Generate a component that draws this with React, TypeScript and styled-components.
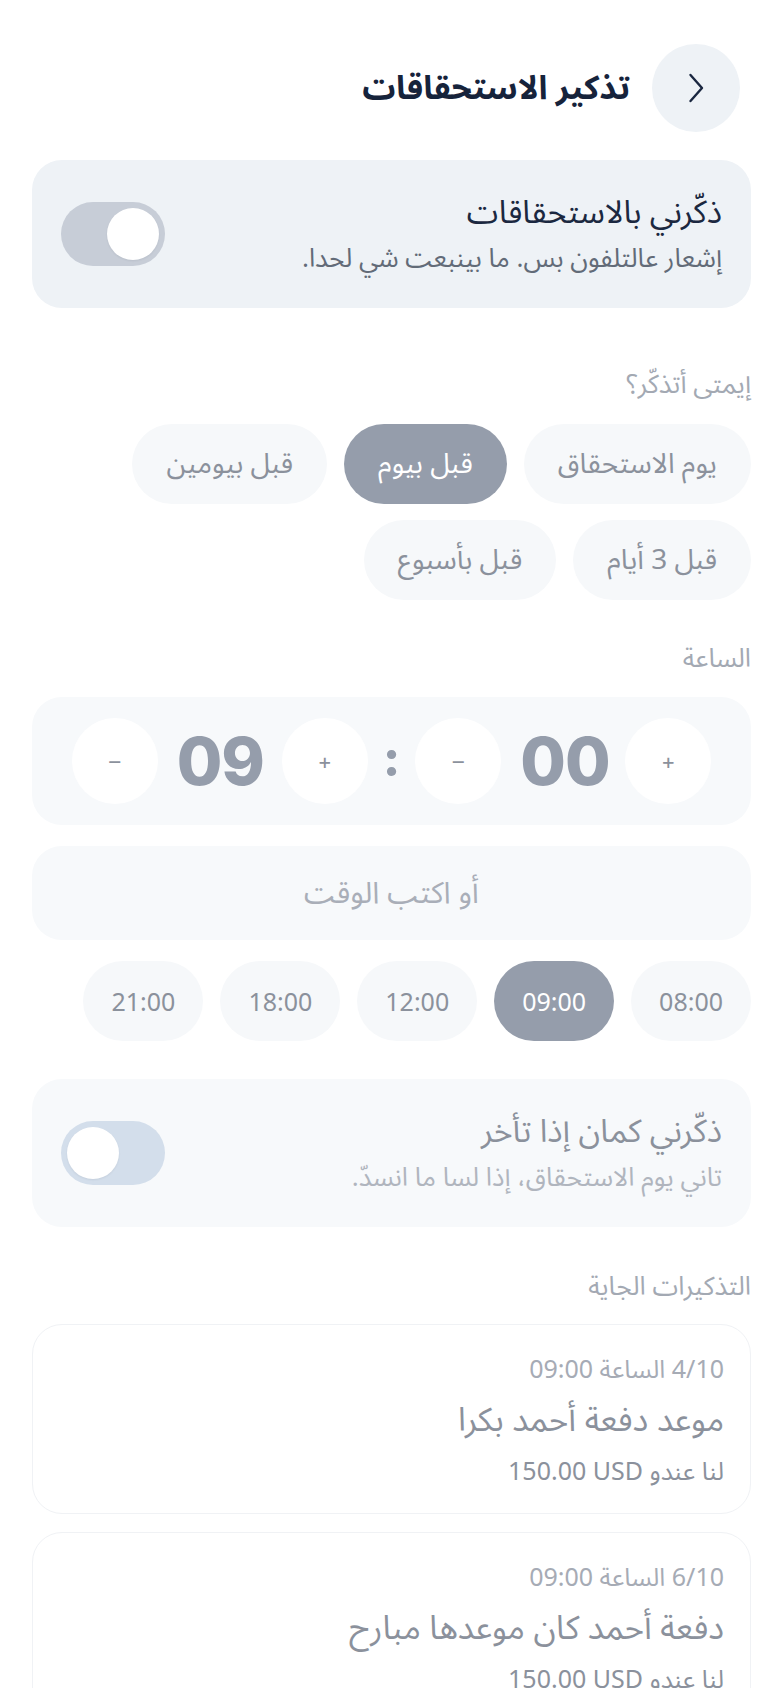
import React from "react";
import styled, { createGlobalStyle } from "styled-components";

const GlobalStyle = createGlobalStyle`
  body {
    margin: 0;
    background: #ffffff;
    font-family: "Noto Sans Arabic", "DejaVu Sans", "Noto Sans", sans-serif;
  }
`;

const Page = styled.div`
  direction: rtl;
  padding: 44px 29px 40px 32px;
  display: flex;
  flex-direction: column;
`;

const Header = styled.div`
  display: flex;
  align-items: center;
  gap: 22px;
  padding-right: 11px;
`;

const BackButton = styled.button`
  width: 88px;
  height: 88px;
  border-radius: 50%;
  border: none;
  background: #eef2f6;
  display: flex;
  align-items: center;
  justify-content: center;
  padding: 0;
`;

const Title = styled.h1`
  margin: 0;
  font-size: 33px;
  font-weight: 700;
  color: #16233b;
`;

const ToggleCard = styled.div<{ $strong?: boolean }>`
  display: flex;
  align-items: center;
  justify-content: space-between;
  min-height: 148px;
  box-sizing: border-box;
  padding: 0 29px;
  border-radius: 30px;
  background: ${(p) => (p.$strong ? "#eef2f6" : "#f7f9fb")};
  margin-top: ${(p) => (p.$strong ? "28px" : "38px")};
`;

const ToggleText = styled.div`
  display: flex;
  flex-direction: column;
  gap: 10px;
`;

const ToggleTitle = styled.div<{ $strong?: boolean }>`
  font-size: 32px;
  line-height: 40px;
  color: ${(p) => (p.$strong ? "#1b2840" : "#8b919c")};
`;

const ToggleSub = styled.div<{ $strong?: boolean }>`
  font-size: 26px;
  line-height: 32px;
  color: ${(p) => (p.$strong ? "#626b78" : "#b0b5be")};
`;

const Track = styled.div<{ $on?: boolean }>`
  width: 104px;
  height: 64px;
  border-radius: 32px;
  box-sizing: border-box;
  padding: 6px;
  display: flex;
  justify-content: ${(p) => (p.$on ? "flex-start" : "flex-end")};
  background: ${(p) => (p.$on ? "#c7cdd7" : "#d3deeb")};
`;

const Knob = styled.div`
  width: 52px;
  height: 52px;
  border-radius: 50%;
  background: #ffffff;
  box-shadow: 0 1px 2px rgba(40, 50, 70, 0.08);
`;

const SectionLabel = styled.div<{ $top: number }>`
  font-size: 26px;
  line-height: 34px;
  color: #a3a9b3;
  margin-top: ${(p) => p.$top}px;
`;

const ChipWrap = styled.div<{ $top: number }>`
  display: flex;
  flex-wrap: wrap;
  gap: 16px 17px;
  margin-top: ${(p) => p.$top}px;
`;

const Chip = styled.button<{ $active?: boolean }>`
  height: 80px;
  padding: 0 34px;
  border: none;
  border-radius: 40px;
  font-family: inherit;
  font-size: 28px;
  background: ${(p) => (p.$active ? "#959dab" : "#f6f8fa")};
  color: ${(p) => (p.$active ? "#ffffff" : "#8b919c")};
`;

const TimeChip = styled(Chip)`
  padding: 0 28px;
  font-family: "Noto Sans", "DejaVu Sans", sans-serif;
  font-size: 25px;
`;

const TimeCard = styled.div`
  margin-top: 21px;
  height: 128px;
  border-radius: 30px;
  background: #f7f9fb;
  display: flex;
  align-items: center;
  justify-content: center;
  direction: ltr;
  gap: 15px;
`;

const Stepper = styled.div`
  display: flex;
  align-items: center;
  gap: 19px;
`;

const StepButton = styled.button`
  width: 86px;
  height: 86px;
  border-radius: 50%;
  border: none;
  background: #ffffff;
  color: #8b919c;
  font-family: "Inter", sans-serif;
  font-size: 22px;
  display: flex;
  align-items: center;
  justify-content: center;
  padding: 0;
`;

const Digits = styled.div`
  font-family: "Inter", sans-serif;
  font-size: 66px;
  font-weight: 800;
  color: #959dab;
  width: 86px;
  text-align: center;
  letter-spacing: -1px;
`;

const Colon = styled.div`
  font-family: "Inter", sans-serif;
  font-size: 50px;
  font-weight: 800;
  color: #959dab;
  padding-bottom: 6px;
`;

const TimeInput = styled.div`
  margin-top: 21px;
  height: 94px;
  border-radius: 30px;
  background: #f7f9fb;
  display: flex;
  align-items: center;
  justify-content: center;
  font-size: 30px;
  color: #a9aeb8;
`;

const ReminderCard = styled.div<{ $top: number }>`
  margin-top: ${(p) => p.$top}px;
  border: 1.5px solid #f0f2f5;
  border-radius: 30px;
  background: #ffffff;
  padding: 28px 26px 24px;
  display: flex;
  flex-direction: column;
  gap: 13px;
`;

const ReminderDate = styled.div`
  font-size: 25px;
  line-height: 34px;
  color: #a6abb5;
`;

const ReminderTitle = styled.div`
  font-size: 33px;
  line-height: 42px;
  color: #8b919c;
`;

const ReminderAmount = styled.div`
  font-size: 25px;
  line-height: 34px;
  color: #8b919c;
`;

const Ltr = styled.span`
  direction: ltr;
  unicode-bidi: isolate;
`;

const Chevron = () => (
  <svg width="18" height="32" viewBox="0 0 18 32" fill="none">
    <path
      d="M3.5 3l11.5 13-11.5 13"
      stroke="#1a2740"
      strokeWidth="2.4"
      strokeLinecap="round"
      strokeLinejoin="round"
    />
  </svg>
);

const whenOptions = ["يوم الاستحقاق", "قبل بيوم", "قبل بيومين", "قبل 3 أيام", "قبل بأسبوع"];
const times = ["08:00", "09:00", "12:00", "18:00", "21:00"];

const reminders = [
  { date: "4/10 الساعة 09:00", title: "موعد دفعة أحمد بكرا", amount: "150.00 USD" },
  { date: "6/10 الساعة 09:00", title: "دفعة أحمد كان موعدها مبارح", amount: "150.00 USD" },
];

export default function App() {
  return (
    <>
      <GlobalStyle />
      <Page>
        <Header>
          <BackButton>
            <Chevron />
          </BackButton>
          <Title>تذكير الاستحقاقات</Title>
        </Header>

        <ToggleCard $strong>
          <ToggleText>
            <ToggleTitle $strong>ذكّرني بالاستحقاقات</ToggleTitle>
            <ToggleSub $strong>إشعار عالتلفون بس. ما بينبعت شي لحدا.</ToggleSub>
          </ToggleText>
          <Track $on>
            <Knob />
          </Track>
        </ToggleCard>

        <SectionLabel $top={60}>إيمتى أتذكّر؟</SectionLabel>
        <ChipWrap $top={22}>
          {whenOptions.map((o) => (
            <Chip key={o} $active={o === "قبل بيوم"}>
              {o}
            </Chip>
          ))}
        </ChipWrap>

        <SectionLabel $top={42}>الساعة</SectionLabel>
        <TimeCard>
          <Stepper>
            <StepButton>–</StepButton>
            <Digits>09</Digits>
            <StepButton>+</StepButton>
          </Stepper>
          <Colon>:</Colon>
          <Stepper>
            <StepButton>–</StepButton>
            <Digits>00</Digits>
            <StepButton>+</StepButton>
          </Stepper>
        </TimeCard>
        <TimeInput>أو اكتب الوقت</TimeInput>
        <ChipWrap $top={21}>
          {times.map((t) => (
            <TimeChip key={t} $active={t === "09:00"}>
              {t}
            </TimeChip>
          ))}
        </ChipWrap>

        <ToggleCard>
          <ToggleText>
            <ToggleTitle>ذكّرني كمان إذا تأخر</ToggleTitle>
            <ToggleSub>تاني يوم الاستحقاق، إذا لسا ما انسدّ.</ToggleSub>
          </ToggleText>
          <Track>
            <Knob />
          </Track>
        </ToggleCard>

        <SectionLabel $top={43}>التذكيرات الجاية</SectionLabel>
        {reminders.map((r, i) => (
          <ReminderCard key={r.title} $top={i === 0 ? 20 : 18}>
            <ReminderDate>{r.date}</ReminderDate>
            <ReminderTitle>{r.title}</ReminderTitle>
            <ReminderAmount>
              لنا عندو <Ltr>{r.amount}</Ltr>
            </ReminderAmount>
          </ReminderCard>
        ))}
      </Page>
    </>
  );
}
